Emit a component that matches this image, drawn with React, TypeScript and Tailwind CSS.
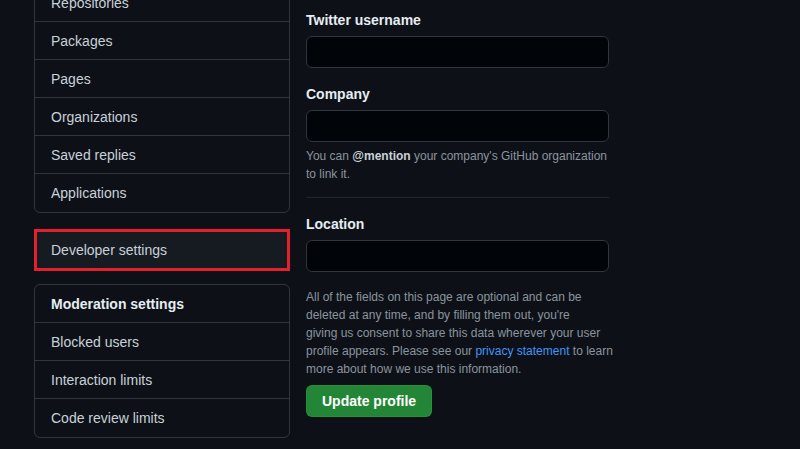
const topItems = ["Repositories", "Packages", "Pages", "Organizations", "Saved replies", "Applications"]
const moderation = ["Blocked users", "Interaction limits", "Code review limits"]

function Field({ label, children }: { label: string; children?: React.ReactNode }) {
  return (
    <div>
      <label className="block text-sm font-semibold leading-5 mb-1.5 text-[#e6edf3]">{label}</label>
      <div className="h-8 rounded-md border border-[#30363d] bg-[#010409]" />
      {children}
    </div>
  )
}

export default function App() {
  return (
    <div
      className="w-[800px] h-[449px] overflow-hidden bg-[#0d1117] text-[#e6edf3]"
      style={{ fontFamily: '"Liberation Sans", Arial, sans-serif' }}
    >
      <div className="flex gap-4 pl-[34px]">
        {/* Sidebar */}
        <aside className="w-[256px] shrink-0">
          <nav className="mt-[-17px] rounded-md border border-[#30363d] divide-y divide-[#30363d]">
            {topItems.map((item) => (
              <div key={item} className="h-[38px] flex items-center px-4 text-sm text-[#c9d1d9]">
                {item}
              </div>
            ))}
          </nav>

          {/* Highlighted item */}
          <div className="mt-4 h-[42px] flex items-center px-[14px] border-[3px] border-[#e5202e] bg-[#161b22] text-sm text-[#c9d1d9]">
            Developer settings
          </div>

          <nav className="mt-[13px] rounded-md border border-[#30363d] divide-y divide-[#30363d]">
            <div className="h-[38px] flex items-center px-4 text-sm font-semibold text-[#e6edf3]">
              Moderation settings
            </div>
            {moderation.map((item) => (
              <div key={item} className="h-[38px] flex items-center px-4 text-sm text-[#c9d1d9]">
                {item}
              </div>
            ))}
          </nav>
        </aside>

        {/* Form */}
        <main className="w-[303px] pt-[10px]">
          <Field label="Twitter username" />
          <div className="mt-4">
            <Field label="Company">
              <p className="mt-[5px] text-xs leading-[18px] text-[#8b949e]">
                You can <span className="font-semibold text-[#c9d1d9]">@mention</span> your company's GitHub organization to link it.
              </p>
            </Field>
          </div>
          <hr className="mt-[14px] border-0 border-t border-[#21262d]" />
          <div className="mt-4">
            <Field label="Location" />
          </div>
          <p className="mt-4 whitespace-nowrap text-xs leading-[18px] text-[#8b949e]">
            All of the fields on this page are optional and can be
            <br />
            deleted at any time, and by filling them out, you're
            <br />
            giving us consent to share this data wherever your user
            <br />
            profile appears. Please see our <span className="text-[#4493f8]">privacy statement</span> to learn
            <br />
            more about how we use this information.
          </p>
          <button className="mt-[7px] h-8 px-[15px] rounded-md border border-[#2ea043]/40 bg-[#238636] text-sm font-semibold text-white">
            Update profile
          </button>
        </main>
      </div>
    </div>
  )
}
